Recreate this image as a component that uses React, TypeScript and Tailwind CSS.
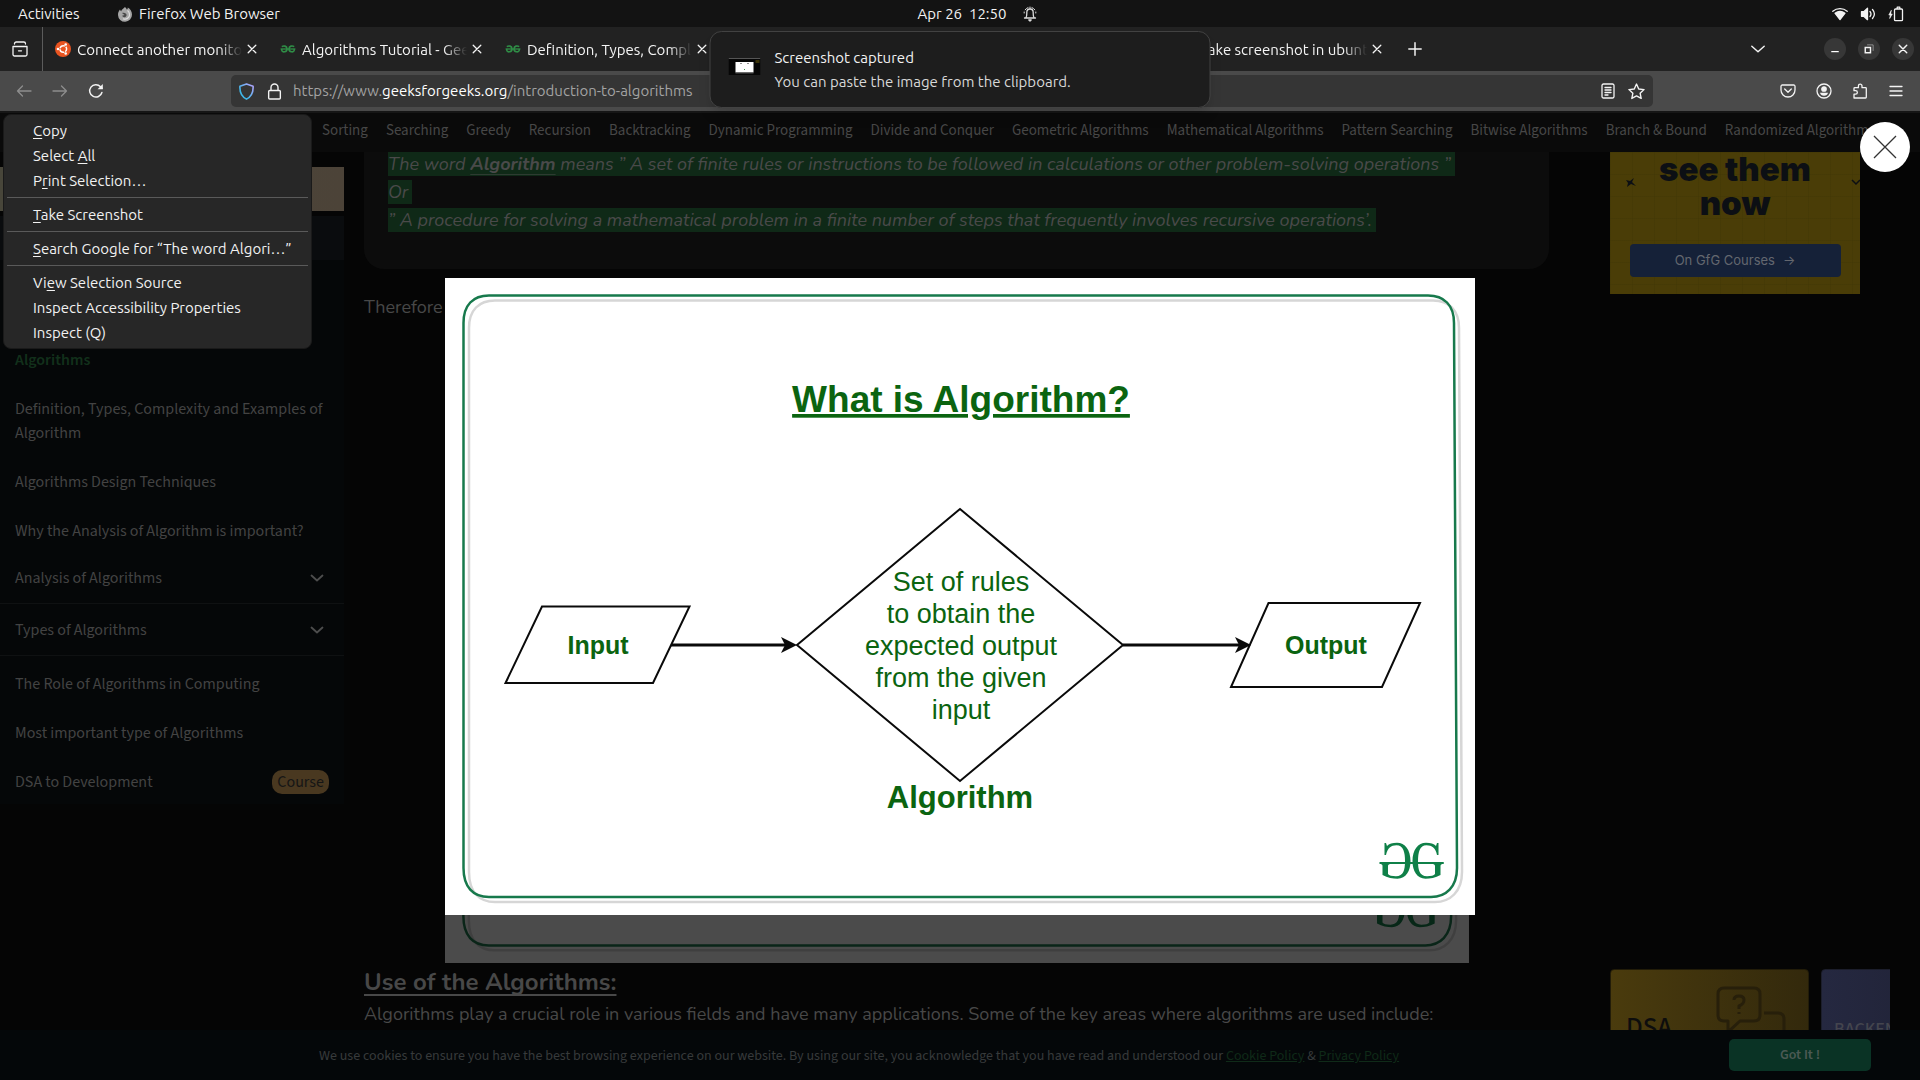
import React from "react";

const UI = "font-['Ubuntu','Open_Sans','Noto_Sans',sans-serif]";
const SITE = "font-['Source_Sans_3','Source_Sans_Pro','Noto_Sans_CJK_SC',sans-serif]";
const ARTICLE = "font-['Nunito','Noto_Sans',sans-serif]";

type IconProps = { children: React.ReactNode; size?: string; className?: string };

function Icon({ children, size = "size-4", className = "" }: IconProps) {
  return (
    <svg
      viewBox="0 0 16 16"
      className={`${size} shrink-0 ${className}`}
      fill="none"
      stroke="currentColor"
      strokeWidth="1.3"
      strokeLinecap="round"
      strokeLinejoin="round"
      aria-hidden="true"
    >
      {children}
    </svg>
  );
}

function GfgIcon() {
  return (
    <svg viewBox="0 0 16 16" className="size-4 shrink-0" fill="none" stroke="#2f8d46" strokeWidth="1.6" aria-hidden="true">
      <path d="M1.800 5.700C3.600 4.400 7 4.700 7 8c0 3.400-4.800 3.600-5.200 1.400V8" />
      <path d="M14.200 5.700C12.400 4.400 9 4.700 9 8c0 3.400 4.800 3.600 5.200 1.400V8" />
      <path d="M.6 8h14.800" strokeWidth="1.300" />
    </svg>
  );
}

function UbuntuIcon() {
  return (
    <svg viewBox="0 0 16 16" className="size-4 shrink-0" aria-hidden="true">
      <circle cx="8" cy="8" r="8" fill="#e95420" />
      <circle cx="8.300" cy="8" r="3.300" fill="none" stroke="#fff" strokeWidth="1.500" strokeDasharray="5.900 1" strokeDashoffset="2.900" />
      <circle cx="3" cy="8" r="1.300" fill="#fff" />
      <circle cx="10.700" cy="3.500" r="1.300" fill="#fff" />
      <circle cx="10.700" cy="12.500" r="1.300" fill="#fff" />
    </svg>
  );
}

function TopBar() {
  return (
    <header className="grid h-[27px] grid-cols-[1fr_auto_1fr] items-center bg-[#131313] text-[15px] leading-5 text-[#f2f2f2]">
      <div className="flex items-center pl-[18px]">
        <button className="w-[99px] text-left">Activities</button>
        <button className="flex items-center gap-1.5">
          <svg viewBox="0 0 16 16" className="size-4" aria-hidden="true">
            <path d="M8 1c1 1 1.500 1.600 1.700 2.500.9-.2 1.200-1 1-2C13.500 3 15 5.500 15 8.600A7 7 0 0 1 1 9c0-2.500.7-4 2-5.500.2.900.6 1.400 1.200 1.700C4.600 3.500 6 3 8 1z" fill="#a6a6a6" />
            <path d="M5 7c1.500-.6 3-.3 4 .8 1 .900.700 2.700-.6 3.200-1.400.5-2.800-.1-3.300-1.200L7.500 9z" fill="#484848" />
            <path d="M10.500 4.500c2 1.500 2.700 4.500 1.200 6.700-1.200 1.800-3.700 2.300-5.700 1.500" fill="none" stroke="#dcdcdc" strokeWidth="1.200" />
          </svg>
          Firefox Web Browser
        </button>
      </div>
      <div className="flex items-center gap-4 pl-9">
        <button className="whitespace-pre">Apr 26  12:50</button>
        <Icon className="text-[#dcdcdc]">
          <path d="M2.500 12h11M4 11.500c1-1.500.8-3 .8-5C4.800 4.500 6 3 8 3s3.200 1.500 3.200 3.500c0 2-.2 3.500.8 5" />
          <path d="M8 1v1.500M3.200 3.800C3.900 2.800 4.800 2 6 1.600M12.800 3.800C12.100 2.800 11.200 2 10 1.600M2.200 7V6M13.800 7V6" strokeWidth="1" />
          <path d="M6.800 14h2.400L8 15z" fill="currentColor" />
        </Icon>
      </div>
      <div className="flex items-center justify-end gap-3 pr-4">
        <Icon>
          <path d="M.8 5.300C4.900 1.800 11.100 1.800 15.200 5.300" />
          <path d="M3 7.200c3-2.200 7-2.200 10 0L8 13.500z" fill="currentColor" />
        </Icon>
        <Icon>
          <path d="M1.500 5.700h2.300L7.500 2.300v11.400L3.800 10.300H1.500z" fill="currentColor" />
          <path d="M10 5.500c1.200 1.500 1.200 3.500 0 5M12.500 3.500c2.300 2.700 2.300 6.300 0 9" />
        </Icon>
        <Icon>
          <path d="M7.500 3h6a1 1 0 0 1 1 1v9.700a1 1 0 0 1-1 1h-6a1 1 0 0 1-1-1V4a1 1 0 0 1 1-1zM9.200 2.500V1.200h2.600v1.300" />
          <path d="M3.200 4.500L.8 9h1.500l-.6 3.500L4.300 8H2.900z" fill="currentColor" strokeWidth=".6" />
        </Icon>
      </div>
    </header>
  );
}

function Tab({ title, icon }: { title: string; icon?: React.ReactNode }) {
  return (
    <div className="flex h-full w-[225px] shrink-0 items-center gap-1.5 px-[7px]">
      {icon ?? <span className="size-4 shrink-0" />}
      <button className="min-w-0 flex-1 overflow-hidden pt-0.5 text-left whitespace-nowrap [mask-image:linear-gradient(to_right,black_86%,transparent)]">
        {title}
      </button>
      <button aria-label={`Close ${title}`} className="mr-1.5 -ml-1">
        <Icon>
          <path d="M4.200 4.200l7.600 7.600M11.800 4.200l-7.600 7.600" />
        </Icon>
      </button>
    </div>
  );
}

function TabBar() {
  return (
    <div className="flex h-11 items-center bg-[#222222] text-[15px] text-[#f4f4f4]">
      <button aria-label="Recent browsing" className="flex h-full w-[43px] items-center border-r border-[#5c5c5c] pl-3">
        <Icon>
          <path d="M1 5.500h14v8a1.500 1.500 0 0 1-1.500 1.500h-11A1.500 1.500 0 0 1 1 13.500zM2.500 3V2.800C2.500 1.500 3.300 1 4.200 1h7.600c.9 0 1.700.5 1.700 1.800V3M6.500 9.800h3" />
        </Icon>
      </button>
      <div className="flex h-full min-w-0 items-center pl-[5px]">
        <Tab title="Connect another monitor" icon={<UbuntuIcon />} />
        <Tab title="Algorithms Tutorial - GeeksforGeeks" icon={<GfgIcon />} />
        <Tab title="Definition, Types, Complexity" icon={<GfgIcon />} />
        <div className="w-[450px] shrink-0" />
        <Tab title="take screenshot in ubuntu" />
      </div>
      <button aria-label="New tab" className="ml-2">
        <Icon size="size-[18px]"><path d="M8 2.500v11M2.500 8h11" /></Icon>
      </button>
      <button aria-label="List all tabs" className="mr-[57px] ml-auto">
        <Icon size="size-[18px]"><path d="M2.500 5.500L8 10.500l5.500-5" /></Icon>
      </button>
      <div className="flex gap-3 pr-[6px]">
        <button aria-label="Minimize" className="grid size-[22px] place-items-center rounded-full bg-[#373737]">
          <Icon size="size-3" className="text-white"><path d="M3 11.500h10" strokeWidth="1.600" strokeLinecap="butt" /></Icon>
        </button>
        <button aria-label="Restore" className="grid size-[22px] place-items-center rounded-full bg-[#373737]">
          <Icon size="size-3">
            <path d="M3 6h7v7H3z" strokeWidth="1.900" strokeLinejoin="miter" />
            <path d="M6 2.500h7.500V10" strokeWidth="1" stroke="#aaa" />
          </Icon>
        </button>
        <button aria-label="Close window" className="grid size-[22px] place-items-center rounded-full bg-[#373737]">
          <Icon size="size-3"><path d="M3 3l10 10M13 3L3 13" strokeWidth="1.900" /></Icon>
        </button>
      </div>
    </div>
  );
}

function Toolbar() {
  return (
    <div className="flex h-[42px] items-center border-b-2 border-[#161616] bg-[#4a4a4a] text-[#f4f4f4]">
      <div className="flex w-[231px] shrink-0 items-center gap-5 pl-4">
        <button aria-label="Back" className="text-[#8d8d8d]">
          <Icon><path d="M15 8H1.500M6.500 3l-5 5 5 5" /></Icon>
        </button>
        <button aria-label="Forward" className="text-[#8d8d8d]">
          <Icon><path d="M1 8h13.500M9.500 3l5 5-5 5" /></Icon>
        </button>
        <button aria-label="Reload">
          <Icon>
            <path d="M13.900 9.500A6.200 6.200 0 1 1 12.500 3.700L14 5.200" strokeWidth="1.500" />
            <path d="M14.800 1v5.200H9.600z" fill="currentColor" stroke="none" />
          </Icon>
        </button>
      </div>
      <div className="flex h-8 min-w-0 flex-1 items-center rounded-[5px] bg-[#353535] pr-2 pl-[7px]">
        <svg viewBox="0 0 16 16" className="size-[17px] shrink-0" fill="none" strokeWidth="1.500" aria-hidden="true">
          <defs>
            <linearGradient id="shield" x1="0" y1="1" x2="1" y2="0">
              <stop offset="0.3" stopColor="#3fb6e8" />
              <stop offset="1" stopColor="#b9a3ff" />
            </linearGradient>
          </defs>
          <path d="M8 .9L14.200 3c.3 5-1.500 9.700-6.200 12.200C3.300 12.700 1.500 8 1.800 3z" stroke="url(#shield)" strokeLinejoin="round" />
        </svg>
        <Icon size="size-[17px]" className="ml-[11px]">
          <path d="M3.500 7h9a1 1 0 0 1 1 1v6a1 1 0 0 1-1 1h-9a1 1 0 0 1-1-1V8a1 1 0 0 1 1-1zM4.700 7V4.300a3.300 3.300 0 0 1 6.600 0V7" />
        </Icon>
        <div className="ml-[10px] min-w-0 flex-1 truncate text-[15px] leading-6 text-[#a3a3a3]">
          https://www.<span className="text-white">geeksforgeeks.org</span>/introduction-to-algorithms
        </div>
        <button aria-label="Toggle reader view">
          <Icon>
            <path d="M3.500 1h9A1.500 1.500 0 0 1 14 2.500v11a1.500 1.500 0 0 1-1.500 1.500h-9A1.500 1.500 0 0 1 2 13.500v-11A1.500 1.500 0 0 1 3.500 1zM5 4.500h6M5 7h6M5 9.500h6M5 12h3" />
          </Icon>
        </button>
        <button aria-label="Bookmark this page" className="ml-3">
          <Icon size="size-[17px]"><path d="M8 1l2.100 4.600 5 .6-3.700 3.400 1 4.900L8 12.100l-4.400 2.400 1-4.900L.9 6.200l5-.6z" /></Icon>
        </button>
      </div>
      <div className="flex items-center gap-5 pr-4 pl-[127px]">
        <button aria-label="Save to Pocket">
          <Icon><path d="M2.300 2h11.400A1.300 1.300 0 0 1 15 3.300V7A7 7 0 0 1 1 7V3.300A1.300 1.300 0 0 1 2.300 2zM4.700 6L8 9.200 11.300 6" /></Icon>
        </button>
        <button aria-label="Account">
          <Icon>
            <circle cx="8" cy="8" r="7" />
            <circle cx="8" cy="6" r="2.200" fill="currentColor" />
            <path d="M4 9.800h8c-.3 2-2 3-4 3s-3.700-1-4-3z" fill="currentColor" stroke="none" />
          </Icon>
        </button>
        <button aria-label="Extensions">
          <Icon>
            <path d="M2 15h11.500a.8.8 0 0 0 .8-.8V5.500a.8.8 0 0 0-.8-.8H10V3a1.800 1.800 0 1 0-3.600 0v1.700H2.800a.8.800 0 0 0-.8.800v2.200h1.600a1.600 1.600 0 1 1 0 3.500H2z" />
          </Icon>
        </button>
        <button aria-label="Open application menu">
          <Icon><path d="M2 3.500h12M2 8h12M2 12.500h12" /></Icon>
        </button>
      </div>
    </div>
  );
}

function Notification() {
  return (
    <div role="status" className="absolute top-[31px] left-1/2 flex h-[77px] w-[501px] -translate-x-1/2 items-center rounded-xl border border-[#424242] bg-[#1d1d1d] pl-[18px] text-[15px] leading-6 text-[#f2f2f2] shadow-lg">
      <svg viewBox="0 0 32 17" className="mb-1.5 h-[17px] w-8 shrink-0" aria-hidden="true">
        <path d="M0 0h32v17H0z" fill="#060606" />
        <path d="M0 0h32v1H0z" fill="#555" />
        <path d="M27 2h4v3h-4z" fill="#3a3208" />
        <path d="M7 4h18v10.500H7z" fill="#fff" />
        <path d="M12 5h1v1h-1zM19 5h1v1h-1z" fill="#222" />
        <path d="M7 14.500h18v1H7z" fill="#555" />
        <path d="M15.500 11h1v1h-1z" fill="#3f9a50" />
      </svg>
      <div className="ml-[14px]">
        <p>Screenshot captured</p>
        <p className="text-[#d8d8d8]">You can paste the image from the clipboard.</p>
      </div>
    </div>
  );
}

const U = ({ children }: { children: string }) => <span className="underline underline-offset-2">{children}</span>;

function MenuItem({ children }: { children: React.ReactNode }) {
  return (
    <button role="menuitem" className="block h-[25px] w-full pl-[29px] text-left leading-[25px] whitespace-nowrap">
      {children}
    </button>
  );
}

const Separator = () => <hr className="mx-[3px] my-1 border-[#5a5a5a]" />;

function ContextMenu() {
  return (
    <div role="menu" className="absolute top-[1px] left-[3px] w-[309px] rounded-lg border border-[#1a1a1a] bg-[#272727] py-[3px] text-[15px] text-[#f2f2f2]">
      <MenuItem><U>C</U>opy</MenuItem>
      <MenuItem>Select <U>A</U>ll</MenuItem>
      <MenuItem>P<U>r</U>int Selection…</MenuItem>
      <Separator />
      <MenuItem><U>T</U>ake Screenshot</MenuItem>
      <Separator />
      <MenuItem><U>S</U>earch Google for “The word Algori…”</MenuItem>
      <Separator />
      <MenuItem>Vi<U>e</U>w Selection Source</MenuItem>
      <MenuItem>Inspect Accessibility Properties</MenuItem>
      <MenuItem>Inspect (Q)</MenuItem>
    </div>
  );
}

const topics = [
  "Sorting", "Searching", "Greedy", "Recursion", "Backtracking", "Dynamic Programming", "Divide and Conquer",
  "Geometric Algorithms", "Mathematical Algorithms", "Pattern Searching", "Bitwise Algorithms", "Branch & Bound",
  "Randomized Algorithms",
];

function TopicNav() {
  return (
    <nav className={`${SITE} flex h-[39px] shrink-0 items-center gap-[18px] overflow-hidden bg-[#0a0a0a] pb-[3px] pl-[322px] text-[15px] leading-5 whitespace-nowrap text-[#474747]`}>
      {topics.map((t) => (
        <a key={t} href="#topic">{t}</a>
      ))}
    </nav>
  );
}

const Chevron = () => (
  <Icon className="text-[#4d4d4d]"><path d="M2.500 5.500L8 10.500l5.500-5" strokeWidth="1.800" /></Icon>
);

function Sidebar() {
  return (
    <aside className={`${SITE} w-[344px] shrink-0 pt-[15px] text-base leading-6 text-[#434343]`}>
      <div className="h-11 bg-linear-to-r from-[#48463a] to-[#4c4338]" />
      <div className="mt-[5px] h-[588px] bg-[#050708]">
        <div className="h-11 bg-[#0a0c0e]" />
        <a href="#algorithms" className="mt-[88px] block pl-[15px] font-semibold text-[#12301b]">Algorithms</a>
        <a href="#definition" className="mt-[25px] block px-[15px]">Definition, Types, Complexity and Examples of Algorithm</a>
        <a href="#design" className="mt-[25px] block pl-[15px]">Algorithms Design Techniques</a>
        <a href="#why" className="mt-[25px] block pl-[15px]">Why the Analysis of Algorithm is important?</a>
        <button className="mt-[9px] flex h-[52px] w-full items-center justify-between border-b border-[#0f1112] pr-[19px] pl-[15px]">
          Analysis of Algorithms <Chevron />
        </button>
        <button className="flex h-[52px] w-full items-center justify-between border-b border-[#0f1112] pr-[19px] pl-[15px]">
          Types of Algorithms <Chevron />
        </button>
        <a href="#role" className="mt-4 block pl-[15px]">The Role of Algorithms in Computing</a>
        <a href="#important" className="mt-[25px] block pl-[15px]">Most important type of Algorithms</a>
        <a href="#dsa" className="mt-[25px] flex justify-between pr-[15px] pl-[15px]">
          DSA to Development
          <span className="rounded-[10px] bg-[#493820] px-[5px] text-[#151515]">Course</span>
        </a>
      </div>
    </aside>
  );
}

const G_PATH =
  "M993.500 565V577H992C990.500 570 987 567.300 981.500 567.300C974.500 567.300 973 575 973 583C973 592 974.500 598.200 982 598.200C986 598.200 989 597.500 990 596V588C990 586.500 988.500 586 987 586V584H998.500V586C996.500 586 995.500 586.500 995.500 588V597C990.500 600 985 600.700 980.500 600.700C972 600.700 967.500 593 967.500 583C967.500 572 973 564.800 981 564.800C985.500 564.800 989 566 991 568L992 565Z";

/* Framed card with the brand mark; the diagram is drawn inside it. */
function FramedCard({ className, children }: { className: string; children?: React.ReactNode }) {
  return (
    <svg viewBox="0 0 1030 637" className={className} role="img" aria-label="What is Algorithm?">
      <path d="M0 0H1030V637H0Z" fill="#fff" />
      <g fill="none" strokeWidth="2.500">
        <path d="M50 22.500H988C1004 22.500 1014 32 1014 50L1017 594C1017 614 1005 624 990 624H50C34 624 24 614 24 594V50C24 32 34 22.500 50 22.500Z" stroke="#d6d6d6" />
        <path d="M44 17.500H983C999 17.500 1009 27 1009 45L1012 590C1012 609 1001 619 986 619H44C28 619 18.500 609 18.500 590V45C18.500 27 28 17.500 44 17.500Z" stroke="#17794c" />
      </g>
      <g fill="#0f8048">
        <path d={G_PATH} />
        <path d={G_PATH} transform="matrix(-1 0 0 1 1933 0)" />
        <path d="M935 584H998.500V586H935Z" />
      </g>
      {children}
    </svg>
  );
}

function Diagram() {
  return (
    <FramedCard className="w-[1030px]">
      <g fill="none" stroke="#0a0a0a" strokeWidth="2">
        <path d="M97 328.500H244.500L208 405H60.500Z" />
        <path d="M823.500 325H975L937 409H786Z" />
        <path d="M515 231L678 367L515 503L352 367Z" />
        <path d="M226 367H342M678 367H797" strokeWidth="3" />
      </g>
      <g fill="#0a0a0a">
        <path d="M352 367L336 359L340 367L336 375Z" />
        <path d="M806 367L790 359L794 367L790 375Z" />
      </g>
      <g fill="#0b6410" textAnchor="middle" fontFamily="'Liberation Sans', Arial, sans-serif">
        <text x="516" y="134" fontSize="37" fontWeight="700" textDecoration="underline">What is Algorithm?</text>
        <g fontSize="27">
          <text x="516" y="313">Set of rules</text>
          <text x="516" y="345">to obtain the</text>
          <text x="516" y="377">expected output</text>
          <text x="516" y="409">from the given</text>
          <text x="516" y="441">input</text>
        </g>
        <text x="153" y="376" fontSize="25" fontWeight="700">Input</text>
        <text x="881" y="376" fontSize="25" fontWeight="700">Output</text>
        <text x="515" y="530" fontSize="31" fontWeight="700">Algorithm</text>
      </g>
    </FramedCard>
  );
}

function Mark({ children }: { children: React.ReactNode }) {
  return (
    <p className="h-7 whitespace-nowrap">
      <mark className="inline-block bg-[#0f2917] pr-1 leading-6 text-[#4a4a4a]">{children}</mark>
    </p>
  );
}

function Article() {
  return (
    <article className={`${ARTICLE} min-w-0 flex-1 text-lg leading-7 text-[#484848]`}>
      <blockquote className="-mt-1 h-[121px] rounded-b-[20px] bg-[#0c0c0c] pt-0.5 pl-6 italic">
        <Mark>The word <b className="underline decoration-[#2d3b31] underline-offset-4">Algorithm</b> means ” A set of finite rules or instructions to be followed in calculations or other problem-solving operations ”</Mark>
        <Mark>Or </Mark>
        <Mark>” A procedure for solving a mathematical problem in a finite number of steps that frequently involves recursive operations’.</Mark>
      </blockquote>
      <p className="mt-6">Therefore</p>
      <FramedCard className="mx-auto mt-[9px] w-[1024px] opacity-[0.28]" />
      <h2 className="mt-px text-2xl leading-9 font-bold underline underline-offset-4">Use of the Algorithms:</h2>
      <p className="whitespace-nowrap">
        Algorithms play a crucial role in various fields and have many applications. Some of the key areas where algorithms are used include:
      </p>
    </article>
  );
}

function Ads() {
  return (
    <aside className="ml-[61px] flex w-[310px] shrink-0 flex-col overflow-hidden pr-[30px]">
      <div className="relative h-[142px] w-[250px] shrink-0 bg-[#4a3d07] bg-[linear-gradient(#41360666_1px,transparent_1px),linear-gradient(90deg,#41360666_1px,transparent_1px)] bg-size-[22px_22px] text-center font-['Inter',sans-serif]">
        <p className="text-[33px] leading-[34px] font-black text-[#0c0f14]">see them<br />now</p>
        <svg viewBox="0 0 250 142" className="absolute inset-0" fill="none" aria-hidden="true">
          <path d="M24 26L22 30L26 34L21 32L17 35L18 31L16 28L20 29Z" fill="#0c0f14" />
          <path d="M242 28L246 32L250 28" stroke="#0c0f14" strokeWidth="1.500" />
        </svg>
        <button className="mx-auto mt-6 flex h-[33px] w-[211px] items-center justify-center gap-2 rounded-[4px] bg-[#152138] text-[13px] text-[#63676f]">
          On GfG Courses <span>→</span>
        </button>
      </div>
      <div className={`${SITE} mt-[675px] flex shrink-0 gap-3 overflow-hidden`}>
        <div className="relative h-[70px] w-[199px] shrink-0 rounded-t-[4px] border border-[#221c08] bg-linear-to-r from-[#4a3b0d] to-[#33290c] pt-10 pl-[15px] text-[27px] leading-9 font-medium text-[#0d0d0d]">
          DSA
          <svg viewBox="0 0 72 54" className="absolute top-4 right-5 h-[54px] w-[72px]" fill="none" stroke="#271f0a" strokeWidth="3" strokeLinejoin="round" aria-hidden="true">
            <path d="M48 27H62Q68 27 68 33V54M32 54V48" />
            <path d="M8 2H38Q44 2 44 8V29Q44 35 38 35H24L12 46V35H8Q2 35 2 29V8Q2 2 8 2Z" />
            <path d="M18 14Q18 10 23 10T28 14Q28 18 23 20V23M23 26V28" />
            <path d="M36 46h3M46 46h3M56 46h3" strokeWidth="4" />
          </svg>
        </div>
        <div className="h-[70px] w-[199px] shrink-0 rounded-tl-[4px] border border-[#1c1e2c] bg-linear-to-r from-[#252840] to-[#1d1f30] pt-[46px] pl-3 text-lg leading-7 font-medium whitespace-nowrap text-[#44454e]">
          BACKEND
        </div>
      </div>
    </aside>
  );
}

function CookieBar() {
  return (
    <footer className={`${SITE} flex h-[50px] shrink-0 items-center justify-between bg-[#040709] pr-[49px] pl-[319px] text-sm leading-5 text-[#373a3b]`}>
      <p className="pt-0.5 whitespace-nowrap">
        We use cookies to ensure you have the best browsing experience on our website. By using our site, you acknowledge that you have read and understood our{" "}
        <a href="#cookies" className="text-[#0f2a18] underline">Cookie Policy</a> &amp;{" "}
        <a href="#privacy" className="text-[#0f2a18] underline">Privacy Policy</a>
      </p>
      <button className="h-8 w-[142px] rounded-[5px] bg-[#0a3325] font-semibold text-[#4b5a54]">Got It !</button>
    </footer>
  );
}

export default function App() {
  return (
    <div className={`${UI} relative flex h-screen flex-col overflow-hidden bg-[#050505]`}>
      <TopBar />
      <TabBar />
      <Toolbar />
      <main className="relative flex min-h-0 flex-1 flex-col">
        <TopicNav />
        <div className="flex min-h-0 flex-1 gap-5 overflow-hidden">
          <Sidebar />
          <div className="flex min-w-0 flex-1">
            <Article />
            <Ads />
          </div>
        </div>
        <CookieBar />
        <div role="dialog" aria-label="Image preview" className="absolute inset-0 grid place-items-center">
          <Diagram />
          <button aria-label="Close preview" className="absolute top-[9px] right-[10px] grid size-[50px] place-items-center rounded-full bg-white">
            <svg viewBox="0 0 24 24" className="size-6" stroke="#333" strokeWidth="1.300" aria-hidden="true">
              <path d="M1 1L23 23M23 1L1 23" />
            </svg>
          </button>
        </div>
        <ContextMenu />
      </main>
      <Notification />
    </div>
  );
}
